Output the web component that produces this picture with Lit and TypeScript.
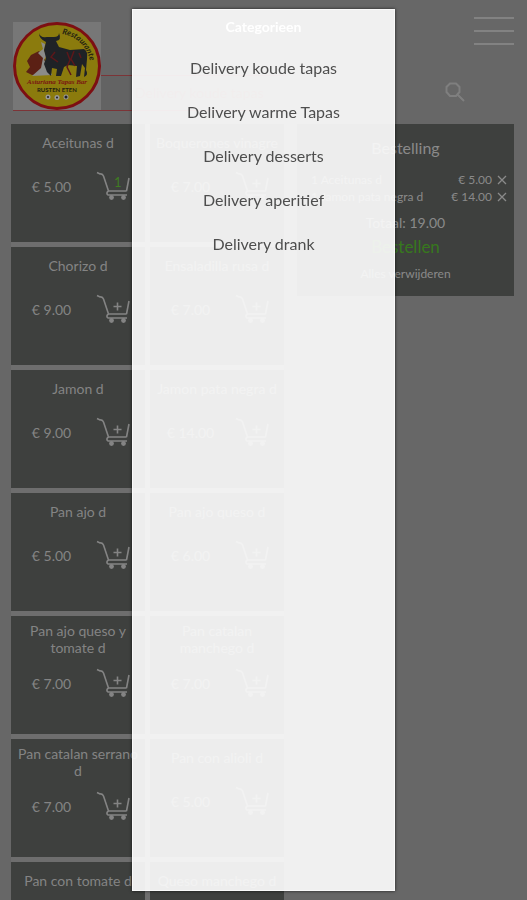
import { LitElement, html, css, svg } from "lit";
import { customElement, property } from "lit/decorators.js";
import { classMap } from "lit/directives/class-map.js";

interface Dish {
  name: string;
  price: string;
  count?: number;
  twoLines?: boolean;
}

const dishes: Dish[] = [
  { name: "Aceitunas d", price: "€ 5.00", count: 1 },
  { name: "Boquerones vinagre", price: "€ 7.00" },
  { name: "Chorizo d", price: "€ 9.00" },
  { name: "Ensaladilla rusa d", price: "€ 7.00" },
  { name: "Jamon d", price: "€ 9.00" },
  { name: "Jamon pata negra d", price: "€ 14.00" },
  { name: "Pan ajo d", price: "€ 5.00" },
  { name: "Pan ajo queso d", price: "€ 6.00" },
  { name: "Pan ajo queso y tomate d", price: "€ 7.00", twoLines: true },
  { name: "Pan catalan manchego d", price: "€ 7.00", twoLines: true },
  { name: "Pan catalan serrano d", price: "€ 7.00", twoLines: true },
  { name: "Pan con alioli d", price: "€ 5.00" },
  { name: "Pan con tomate d", price: "€ 5.00" },
  { name: "Queso manchego d", price: "€ 9.00" },
];

const orderLines = [
  { name: "1 Aceitunas d", price: "€ 5.00" },
  { name: "1 Jamon pata negra d", price: "€ 14.00" },
];

const categories = [
  "Delivery koude tapas",
  "Delivery warme Tapas",
  "Delivery desserts",
  "Delivery aperitief",
  "Delivery drank",
];

@customElement("dish-card")
class DishCard extends LitElement {
  @property({ attribute: false }) dish!: Dish;

  static styles = css`
    :host {
      display: block;
      height: 118px;
      box-sizing: border-box;
      background: #3e403e;
      color: #848484;
      overflow: hidden;
    }
    .name {
      margin: 0;
      padding: 10px 4px 8px;
      font-size: 14px;
      line-height: 17px;
      font-weight: 400;
      text-align: center;
    }
    .name.tall {
      padding: 6px 4px 0;
    }
    .row {
      display: grid;
      grid-template-columns: 1fr 1fr;
      align-items: center;
      justify-items: center;
      height: 54px;
      padding: 0 2px 0 10px;
    }
    .price {
      font-size: 14px;
    }
    .add {
      padding: 0;
      border: 0;
      background: none;
      color: inherit;
      line-height: 0;
      cursor: pointer;
    }
    .count {
      fill: #3f7d22;
      font: 13px Lato, sans-serif;
    }
  `;

  render() {
    const d = this.dish;
    return html`
      <h3 class=${classMap({ name: true, tall: !!d.twoLines })}>${d.name}</h3>
      <div class="row">
        <span class="price">${d.price}</span>
        <button class="add" aria-label="${d.name} toevoegen">
          <svg width="34" height="30" viewBox="0 0 34 30" fill="none" stroke="currentColor" stroke-width="1.6">
            <path d="M1 1.500 L4 3 Q6.500 2.500 7.500 5 L12.500 20 L30.500 20 M33 7 L30.500 20 M12.500 20 Q9.500 22 12 24 L31 24" />
            <circle cx="15.500" cy="26.500" r="2.400" fill="currentColor" stroke="none" />
            <circle cx="27.500" cy="26.500" r="2.400" fill="currentColor" stroke="none" />
            ${d.count
              ? svg`<text class="count" x="18" y="16" stroke="none">${d.count}</text>`
              : svg`<path d="M21.500 8.500 V16.500 M17.500 12.500 H25.500" />`}
          </svg>
        </button>
      </div>
    `;
  }
}

@customElement("order-summary")
class OrderSummary extends LitElement {
  static styles = css`
    :host {
      display: block;
      box-sizing: border-box;
      padding: 14px 2px 12px;
      background: #3e403e;
      color: #8a8a8a;
      text-align: center;
    }
    .title {
      margin: 0 0 13px;
      font-size: 16px;
      line-height: 20px;
      font-weight: 400;
    }
    .lines {
      width: 100%;
      border-collapse: collapse;
      font-size: 12px;
      line-height: 17px;
    }
    .lines td {
      height: 17px;
      padding: 0;
    }
    .lines .item {
      padding-left: 12px;
      text-align: left;
    }
    .lines .amount {
      text-align: right;
    }
    .lines .cell {
      width: 20px;
      text-align: center;
    }
    .remove,
    .submit,
    .clear {
      padding: 0;
      border: 0;
      background: none;
      color: inherit;
      font: inherit;
      cursor: pointer;
    }
    .remove {
      display: block;
      margin: 0 auto;
      line-height: 0;
    }
    .total {
      margin: 8px 0 4px;
      font-size: 14px;
      line-height: 20px;
    }
    .submit {
      display: block;
      margin: 0 auto 5px;
      color: #37781d;
      font-size: 17px;
      line-height: 20px;
    }
    .clear {
      font-size: 12px;
      line-height: 20px;
    }
  `;

  render() {
    return html`
      <h2 class="title">Bestelling</h2>
      <table class="lines">
        ${orderLines.map(
          (l) => html`<tr>
            <td class="item">${l.name}</td>
            <td class="amount">${l.price}</td>
            <td class="cell">
              <button class="remove" aria-label="${l.name} verwijderen">
                <svg width="10" height="10" viewBox="0 0 10 10" stroke="currentColor" stroke-width="1.300">
                  <path d="M1 1 L9 9 M9 1 L1 9" />
                </svg>
              </button>
            </td>
          </tr>`
        )}
      </table>
      <p class="total">Totaal: 19.00</p>
      <button class="submit">Bestellen</button>
      <button class="clear">Alles verwijderen</button>
    `;
  }
}

@customElement("app-root")
class AppRoot extends LitElement {
  static styles = css`
    :host {
      display: block;
      height: 100vh;
      overflow: hidden;
      background: #676767;
      color: #8a8a8a;
      font-family: Lato, sans-serif;
    }
    .header {
      display: flex;
      align-items: flex-start;
      height: 124px;
      box-sizing: border-box;
      padding: 16px 13px 0;
    }
    .brand {
      flex: none;
      margin-top: 6px;
      line-height: 0;
      border-bottom: 1px solid #7c3437;
    }
    .banner {
      flex: 1;
      margin: 59px 0 0;
      padding-left: 34px;
      border-top: 1px solid #7c3437;
      border-bottom: 1px solid #7c3437;
      background: #636363;
      color: #743f41;
      font-size: 14px;
      line-height: 34px;
      font-weight: 400;
      white-space: nowrap;
    }
    .tools {
      flex: none;
      display: flex;
      flex-direction: column;
      align-items: flex-start;
      gap: 36px;
      width: 69px;
      margin-left: 158px;
    }
    .tool {
      padding: 0;
      border: 0;
      background: none;
      color: #7f7f7f;
      line-height: 0;
      cursor: pointer;
    }
    .menu {
      align-self: flex-end;
    }
    .content {
      display: grid;
      grid-template-columns: 273fr 217fr;
      align-items: start;
      gap: 13px;
      padding: 0 13px 0 11px;
    }
    .dishes {
      display: grid;
      grid-template-columns: repeat(2, minmax(0, 1fr));
      gap: 5px;
      background: #6e6e6e;
    }
    .panel {
      position: fixed;
      inset: 9px 0;
      width: 50%;
      margin: 0 auto;
      box-sizing: border-box;
      padding: 7px 0;
      border: 1px solid #fafafa;
      background: rgba(251, 251, 251, 0.93);
      box-shadow: 0 0 3px rgba(0, 0, 0, 0.7);
      text-align: center;
    }
    .heading {
      margin: 0 0 9px;
      color: #fff;
      font-size: 14px;
      line-height: 20px;
      font-weight: 700;
    }
    .link {
      display: block;
      color: #4e4e4e;
      font-size: 16px;
      line-height: 44px;
      text-decoration: none;
    }
    .arc {
      fill: #222211;
      font: italic 700 8px Lato, sans-serif;
    }
    .script {
      fill: #7a1512;
      font: italic 700 7px "Liberation Serif", serif;
    }
    .caps {
      fill: #221c10;
      font: 700 6px Lato, sans-serif;
    }
  `;

  private logo() {
    return html`<svg width="88" height="88" viewBox="0 0 88 88" role="img" aria-label="Logo">
      <rect width="88" height="88" fill="#777" />
      <circle cx="44" cy="44" r="42.500" fill="#8b7b0d" stroke="#7d0f12" stroke-width="3" />
      <path id="arc" d="M49 12 A33 33 0 0 1 77 40" fill="none" />
      <text class="arc"><textPath href="#arc">Restaurante</textPath></text>
      <path fill="#5b2014" d="M26 29 L18 33 L14 39 L17 45 L13 50 L19 53 L27 52 L33 45 L31 34Z" />
      <path fill="#8b8b88" d="M28 20 L32 22 L31 29 L34 33 L31 38 L35 43 L39 53 L19 54 L28 46 L30 36 L25 31 L30 27Z" />
      <path fill="#1f2226" d="M26 11 Q27 16 34 15 L41 15 Q46 15 46 11 Q49 18 43 19 L46 25 L57 28 L71 27 Q75 29 74 37 L73 48 Q76 53 71 55 L72 46 L69 42 L67 54 L63 55 L64 44 L55 43 L51 45 L48 54 L43 54 L44 47 L39 46 L38 54 L34 50 L31 42 L33 36 L31 28 L33 20 Q26 17 26 11Z" />
      <path fill="none" stroke="#5c171a" stroke-width="1.500" d="M54 30 L57 38 L54 45 L58 53 M61 29 L58 37 L62 44 M42 30 L38 35 L45 40 M66 31 L68 36" />
      <text class="script" x="14" y="62">Asturiana Tapas Bar</text>
      <text class="caps" x="24" y="70">RUSTEN ETEN</text>
      <circle cx="35" cy="75" r="2.500" fill="#999" /><circle cx="44" cy="75.500" r="2.500" fill="#999" /><circle cx="53" cy="75" r="2.500" fill="#999" />
      <circle cx="35" cy="75" r="1" fill="#222" /><circle cx="44" cy="75.500" r="1" fill="#222" /><circle cx="53" cy="75" r="1.500" fill="#222" />
    </svg>`;
  }

  render() {
    return html`
      <header class="header">
        <div class="brand">${this.logo()}</div>
        <h1 class="banner">Delivery koude tapas</h1>
        <div class="tools">
          <button class="tool menu" aria-label="Menu">
            <svg width="40" height="30" viewBox="0 0 40 30" stroke="#828282" stroke-width="2">
              <path d="M0 2 H40 M0 15 H40 M0 28 H40" />
            </svg>
          </button>
          <button class="tool" aria-label="Zoeken">
            <svg width="20" height="20" viewBox="0 0 20 20" fill="none" stroke="currentColor" stroke-width="2">
              <path d="M5 1.500 H11 L14.500 5 V10 L11 14 H5 L1.500 10 V5Z M12.500 12.500 L19 19" />
            </svg>
          </button>
        </div>
      </header>
      <main class="content">
        <section class="dishes">
          ${dishes.map((d) => html`<dish-card .dish=${d}></dish-card>`)}
        </section>
        <order-summary></order-summary>
      </main>
      <nav class="panel" aria-label="Categorieen">
        <h2 class="heading">Categorieen</h2>
        ${categories.map((c) => html`<a class="link" href="#">${c}</a>`)}
      </nav>
    `;
  }
}
